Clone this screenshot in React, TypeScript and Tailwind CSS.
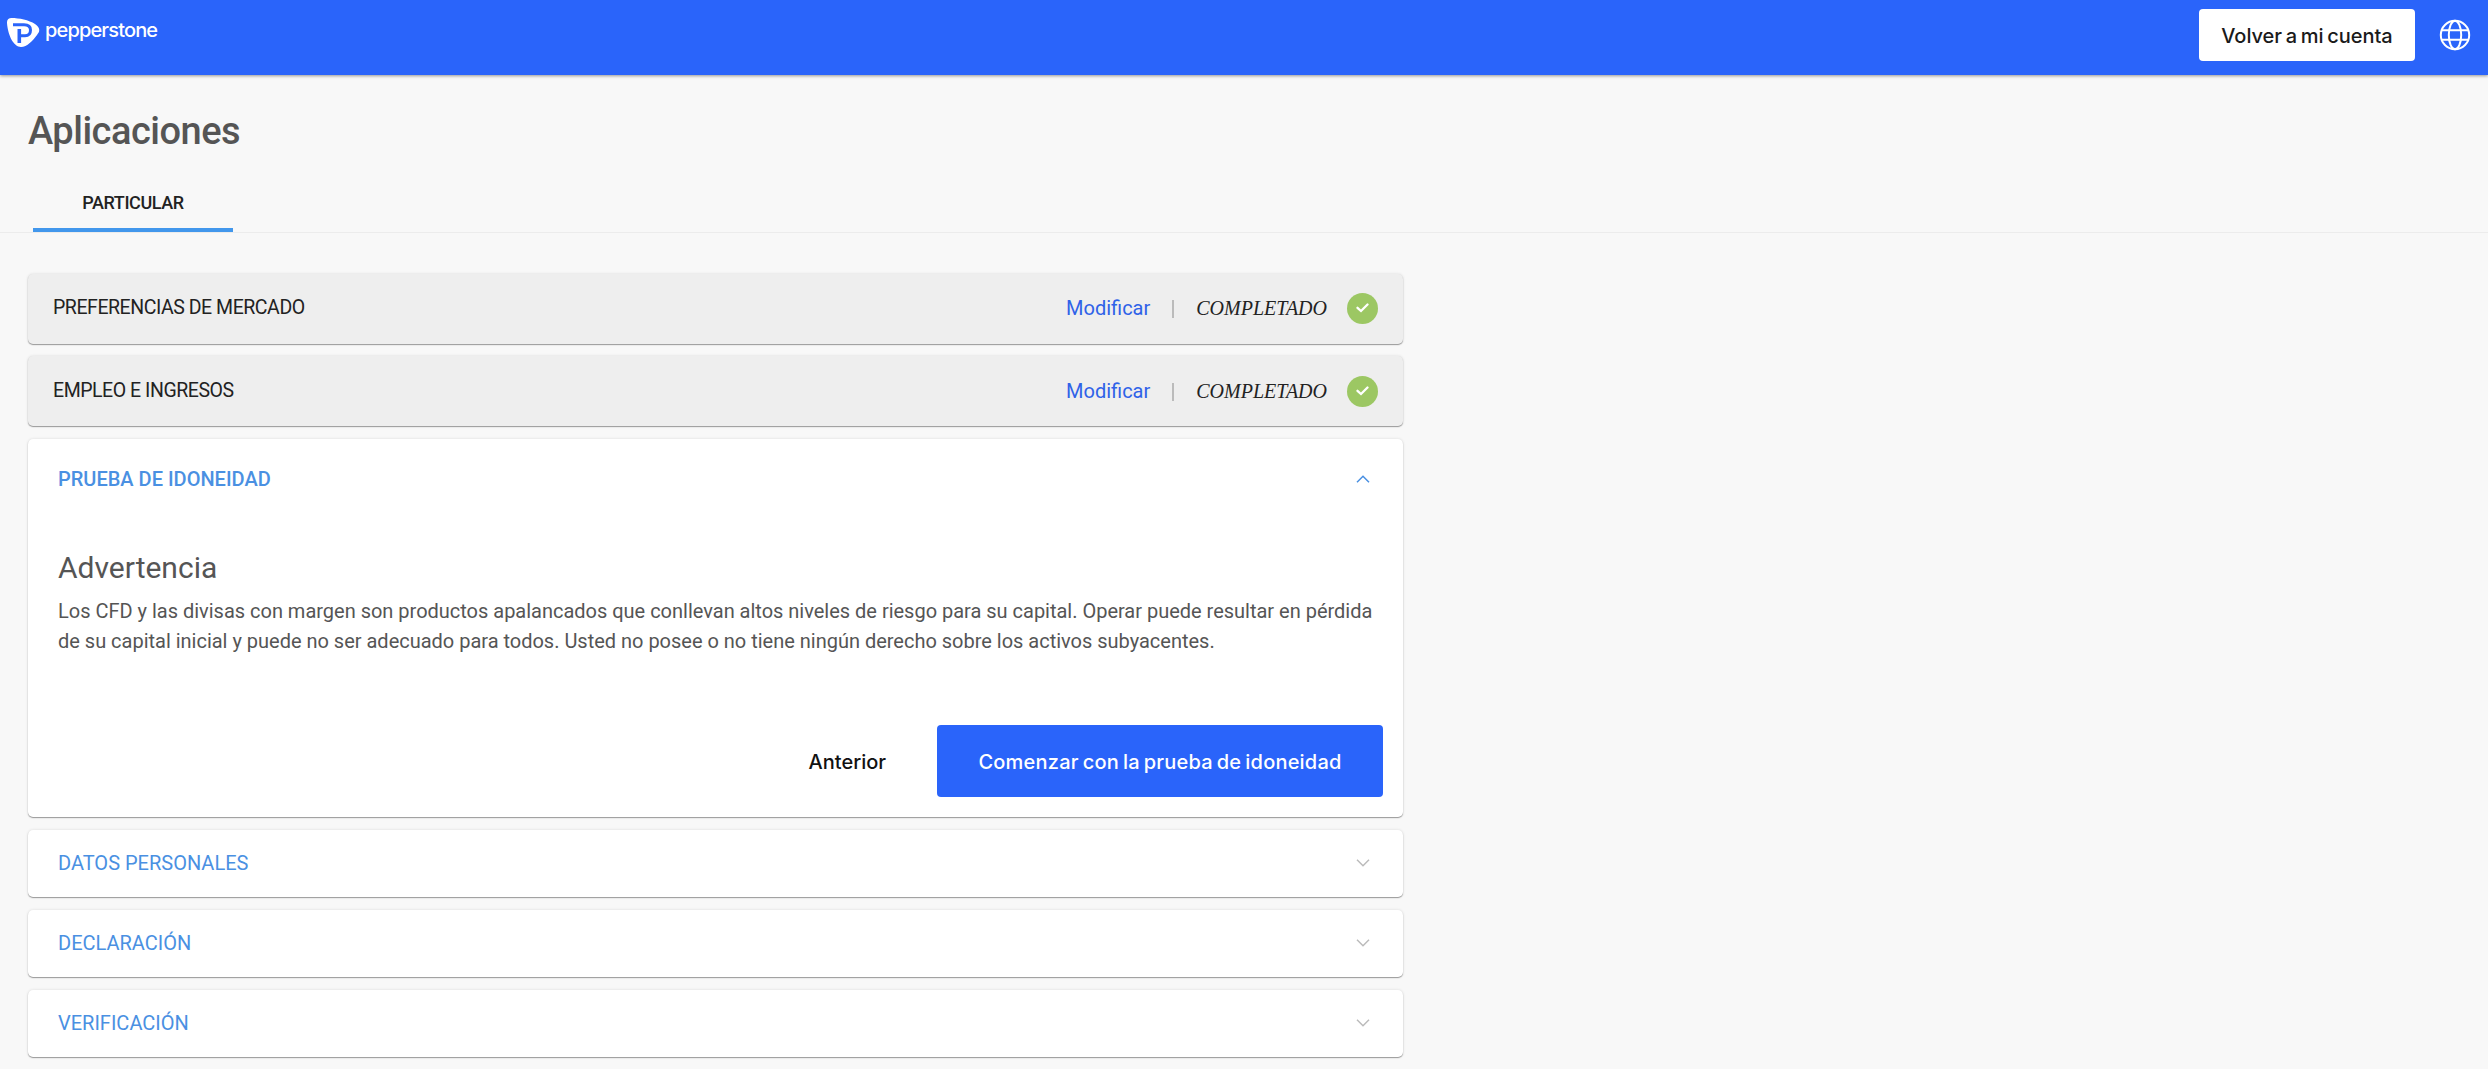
const COMPLETED = ["PREFERENCIAS DE MERCADO", "EMPLEO E INGRESOS"];
const PENDING = ["DATOS PERSONALES", "DECLARACIÓN", "VERIFICACIÓN"];

const CARD = "rounded-[5px] shadow-[0_1px_1px_#999,0_0_3px_rgba(0,0,0,0.12)]";

function Logo() {
  return (
    <div className="flex items-start">
      <svg width="33" height="30" viewBox="0 0 33 30" className="mt-[18px]">
        <path d="M4.500 0 C12 0 22 2 28 6 C33 9.500 33.500 13 30 17 C26 22.500 20 29 14 29 C7 29 1 18 0 5 C-0.200 1.500 1.500 0 4.500 0Z" fill="#fff" />
        <path d="M6 6.700 H17 C22 6.700 23.500 9 23.500 12 C23.500 16 21 17.800 18 17.800 H14" fill="none" stroke="#2a64fa" strokeWidth="3" />
        <path d="M12.300 11 V25" fill="none" stroke="#2a64fa" strokeWidth="3.600" />
      </svg>
      <span className="ml-[5px] mt-[15px] text-[20px] leading-[30px] font-medium tracking-[-0.85px] text-white">pepperstone</span>
    </div>
  );
}

function Globe() {
  return (
    <svg width="32" height="32" viewBox="0 0 32 32" fill="none" stroke="#fff" strokeWidth="2">
      <circle cx="16" cy="16" r="14.200" />
      <ellipse cx="16" cy="16" rx="6.200" ry="14.200" />
      <path d="M3 11.300 H29 M3 20.700 H29" />
    </svg>
  );
}

function Chevron({ up = false }: { up?: boolean }) {
  return (
    <svg width="14" height="8" viewBox="0 0 14 8" fill="none" stroke="currentColor" strokeWidth="1.500">
      <path d={up ? "M1 7.300 L7 1.300 L13 7.300" : "M1 0.700 L7 6.700 L13 0.700"} />
    </svg>
  );
}

export default function App() {
  return (
    <div className="h-[1069px] overflow-hidden bg-[#f8f8f8] font-['Roboto',sans-serif] text-[#222]">
      <header className="flex h-[75px] items-start justify-between bg-[#2a64fa] pl-[7px] pr-[17px] font-['Inter',sans-serif] shadow-[0_1px_3px_rgba(0,0,0,0.4)]">
        <Logo />
        <div className="flex items-center gap-6 pt-[9px]">
          <button type="button" className="h-[52px] w-[216px] rounded-[4px] bg-white pt-px text-[20px] font-medium tracking-[-0.05px] [word-spacing:-1.5px] whitespace-nowrap text-[#1a1a1a]">
            Volver a mi cuenta
          </button>
          <Globe />
        </div>
      </header>

      <h1 className="ml-7 pt-[31px] text-[38px] leading-[50px] font-medium tracking-[-0.5px] text-[#555]">Aplicaciones</h1>

      {/* Tabs */}
      <div className="mt-[17px] flex h-[60px] border-b border-[#ececec] pl-[33px]">
        <div className="flex h-[59px] w-[200px] items-center justify-center border-b-4 border-[#4297ec] pt-1 text-[18px] font-medium tracking-[-0.4px]">PARTICULAR</div>
      </div>

      <main className="ml-7 mt-[41px] w-[1375px]">
        {COMPLETED.map(title => (
          <section key={title} className={`mb-3 flex h-[70px] items-center bg-[#eee] pl-[25px] pr-[25px] text-[20px] first:pb-0.5 ${CARD}`}>
            <span className="text-[19.500px] tracking-[-0.45px]">{title}</span>
            <a className="ml-auto text-[#2f62e8]">Modificar</a>
            <span className="ml-[22px] mr-[22px] mt-0.5 h-[18px] w-[2px] bg-[#bbb]" />
            <span className="font-['Liberation_Serif',serif] italic">COMPLETADO</span>
            <span className="ml-5 flex size-[31px] items-center justify-center rounded-full bg-[#9cc763]">
              <svg width="13" height="10" viewBox="0 0 13 10" fill="none" stroke="#fff" strokeWidth="2.300">
                <path d="M1.500 4.800 L5 8 L11.500 1.500" strokeLinecap="round" />
              </svg>
            </span>
          </section>
        ))}

        <section className={`mt-[13px] h-[378px] bg-white pl-[30px] pr-5 ${CARD}`}>
          <div className="flex h-[79px] items-center justify-between pr-[13px] text-[#4a90e2]">
            <span className="text-[20px] font-medium">PRUEBA DE IDONEIDAD</span>
            <Chevron up />
          </div>
          <h2 className="pt-[30px] text-[30px] leading-10 text-[#555]">Advertencia</h2>
          <p className="mt-2 text-[20px] leading-[30px] tracking-[-0.01px] whitespace-nowrap text-[#555]">
            Los CFD y las divisas con margen son productos apalancados que conllevan altos niveles de riesgo para su capital. Operar puede resultar en pérdida
            <br />
            de su capital inicial y puede no ser adecuado para todos. Usted no posee o no tiene ningún derecho sobre los activos subyacentes.
          </p>
          <div className="mt-[69px] flex items-center justify-end gap-[51px] font-['Inter',sans-serif] text-[20px] font-medium">
            <button type="button" className="pt-0.5 text-[#111]">Anterior</button>
            <button type="button" className="h-[72px] w-[446px] rounded-[4px] bg-[#2a64fa] pt-0.5 tracking-[0.2px] [word-spacing:-1.5px] text-white">Comenzar con la prueba de idoneidad</button>
          </div>
        </section>

        {PENDING.map(title => (
          <section key={title} className={`mt-[13px] flex h-[67px] items-center justify-between bg-white pb-px pl-[30px] pr-[33px] text-[20px] text-[#4a90e2] ${CARD}`}>
            <span>{title}</span>
            <span className="text-[#bbb]"><Chevron /></span>
          </section>
        ))}
      </main>
    </div>
  );
}
